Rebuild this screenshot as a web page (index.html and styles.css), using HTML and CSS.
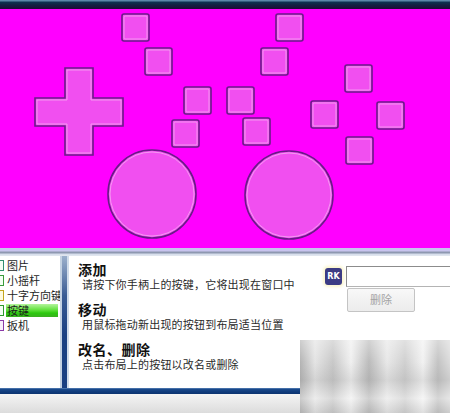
FILE: index.html
```html
<!DOCTYPE html>
<html>
<head>
<meta charset="utf-8">
<link rel="stylesheet" href="styles.css">
</head>
<body>
<div class="app">
  <div class="titlebar"></div>
  <svg class="canvas" width="450" height="239" viewBox="0 9 450 239">
    <rect class="bg" x="0" y="9" width="450" height="239"/>
    <g class="keys">
      <rect class="key" x="122" y="14" width="27" height="27" rx="2"/>
      <rect class="key" x="145" y="48" width="27" height="27" rx="2"/>
      <rect class="key" x="184" y="87" width="27" height="27" rx="2"/>
      <rect class="key" x="172" y="120" width="27" height="27" rx="2"/>
      <rect class="key" x="276" y="14" width="27" height="27" rx="2"/>
      <rect class="key" x="261" y="48" width="27" height="27" rx="2"/>
      <rect class="key" x="345" y="65" width="27" height="27" rx="2"/>
      <rect class="key" x="227" y="87" width="27" height="27" rx="2"/>
      <rect class="key" x="311" y="101" width="27" height="27" rx="2"/>
      <rect class="key" x="377" y="102" width="27" height="27" rx="2"/>
      <rect class="key" x="243" y="118" width="27" height="27" rx="2"/>
      <rect class="key" x="346" y="137" width="27" height="27" rx="2"/>
      <path class="key" d="M65,68 H93 V98 H123 V126 H93 V155 H65 V126 H35 V98 H65 Z"/>
      <circle class="key" cx="152" cy="194" r="44"/>
      <circle class="key" cx="289" cy="195" r="44"/>
    </g>
    <g class="hls">
      <rect class="hl" x="124" y="16" width="23" height="23" rx="1"/>
      <rect class="hl" x="147" y="50" width="23" height="23" rx="1"/>
      <rect class="hl" x="186" y="89" width="23" height="23" rx="1"/>
      <rect class="hl" x="174" y="122" width="23" height="23" rx="1"/>
      <rect class="hl" x="278" y="16" width="23" height="23" rx="1"/>
      <rect class="hl" x="263" y="50" width="23" height="23" rx="1"/>
      <rect class="hl" x="347" y="67" width="23" height="23" rx="1"/>
      <rect class="hl" x="229" y="89" width="23" height="23" rx="1"/>
      <rect class="hl" x="313" y="103" width="23" height="23" rx="1"/>
      <rect class="hl" x="379" y="104" width="23" height="23" rx="1"/>
      <rect class="hl" x="245" y="120" width="23" height="23" rx="1"/>
      <rect class="hl" x="348" y="139" width="23" height="23" rx="1"/>
      <path class="hl" d="M67,70 H91 V100 H121 V124 H91 V153 H67 V124 H37 V100 H67 Z"/>
      <circle class="hl" cx="152" cy="194" r="42"/>
      <circle class="hl" cx="289" cy="195" r="42"/>
    </g>
  </svg>
  <div class="strip"></div>
  <div class="bottom">
    <div class="leftcol">
      <div class="panel">
        <ul class="list">
          <li class="item"><span class="ico ico-pic"></span><span class="label">图片</span></li>
          <li class="item"><span class="ico ico-stick"></span><span class="label">小摇杆</span></li>
          <li class="item"><span class="ico ico-dpad"></span><span class="label">十字方向键</span></li>
          <li class="item selected"><span class="ico ico-key"></span><span class="label">按键</span></li>
          <li class="item"><span class="ico ico-trig"></span><span class="label">扳机</span></li>
        </ul>
        <div class="splitter"></div>
        <div class="help">
          <div class="block">
            <div class="head">添加</div>
            <div class="desc">请按下你手柄上的按键，它将出现在窗口中</div>
          </div>
          <div class="block">
            <div class="head">移动</div>
            <div class="desc">用鼠标拖动新出现的按钮到布局适当位置</div>
          </div>
          <div class="block">
            <div class="head">改名、删除</div>
            <div class="desc">点击布局上的按钮以改名或删除</div>
          </div>
        </div>
      </div>
      <div class="navy"></div>
      <div class="status"></div>
    </div>
    <div class="rightcol">
      <div class="controls">
        <div class="row">
          <span class="ime">RK</span>
          <input class="name" type="text">
        </div>
        <button class="del" disabled>删除</button>
      </div>
      <div class="watermark"></div>
    </div>
  </div>
</div>
</body>
</html>
```
FILE: styles.css
```css
html, body {
  margin: 0;
  padding: 0;
}
body {
  width: 450px;
  height: 413px;
  overflow: hidden;
  background: #ffffff;
  font-family: "Liberation Sans", "Noto Sans CJK SC", sans-serif;
  color: #1c1c1c;
}
.app {
  display: flex;
  flex-direction: column;
  width: 450px;
  height: 413px;
}
.titlebar {
  height: 9px;
  flex: none;
  background: linear-gradient(#5a86a8 0, #5a86a8 1px, #0d3352 2px, #122042 5px, #1e0a38 9px);
}
.canvas {
  display: block;
  flex: none;
}
.bg {
  fill: #ff00ff;
}
.key {
  fill: #f14ff0;
  stroke: #6a1a88;
  stroke-width: 1.6;
}
.hl {
  fill: none;
  stroke: #f6a4f2;
  stroke-width: 1;
  opacity: 0.85;
}
.strip {
  height: 8px;
  flex: none;
  background: linear-gradient(#c8c4ee 0, #c8c4ee 3px, #8e98b0 4px, #8e98b0 5px, #d4dcea 6px, #e4e8f0 8px);
}
.bottom {
  flex: 1;
  display: flex;
  min-height: 0;
}
.leftcol {
  width: 300px;
  display: flex;
  flex-direction: column;
}
.panel {
  height: 132px;
  display: flex;
  background: #ffffff;
}
.list {
  list-style: none;
  margin: 0;
  padding: 2px 0 0 0;
  width: 60px;
  overflow: hidden;
  flex: none;
}
.item {
  display: flex;
  align-items: center;
  height: 15px;
  white-space: nowrap;
}
.ico {
  flex: none;
  width: 9px;
  height: 9px;
  margin-left: -7px;
  margin-right: 2px;
  border: 1px solid #3a9a6a;
  background: #f4fff4;
}
.ico-pic { border-color: #2f8f70; }
.ico-stick { border-color: #3a9a3a; }
.ico-dpad { border-color: #c4a41c; background: #fffbe0; }
.ico-key { border-color: #2e9a2e; }
.ico-trig { border-color: #8a3aa8; background: #f8eefc; }
.label {
  flex: 1;
  font-size: 11px;
  line-height: 15px;
  height: 15px;
  padding: 1px 0 0 1px;
  box-sizing: border-box;
  overflow: hidden;
}
.selected .label {
  margin-right: 2px;
  background: linear-gradient(#b4f49c 0%, #62e23e 45%, #2cc80e 70%, #3ab020 100%) center / 100% 13px no-repeat;
}
.splitter {
  flex: none;
  width: 9px;
  background:
    linear-gradient(90deg, #c4d2e2 0, #c4d2e2 2px, transparent 2px, transparent 7px, #d0dcea 7px),
    linear-gradient(#9cb0cc 0, #3a5c94 30%, #1a4082 60%, #1a4082 100%);
}
.help {
  flex: 1;
  padding: 7px 0 0 9px;
  overflow: hidden;
}
.block {
  margin-bottom: 11px;
}
.head {
  font-size: 14px;
  font-weight: bold;
  line-height: 15px;
  letter-spacing: 0.5px;
  color: #111111;
}
.desc {
  font-size: 11px;
  line-height: 14px;
  letter-spacing: 0.2px;
  padding-left: 4px;
  white-space: nowrap;
  color: #2a2a2a;
}
.navy {
  height: 6px;
  flex: none;
  background: linear-gradient(#6e94c4 0, #1a4a8c 1px, #0e3a7a 4px, #0c3470 6px);
}
.status {
  flex: 1;
  background: linear-gradient(#f4f4f4, #dcdcdc);
}
.rightcol {
  width: 150px;
  display: flex;
  flex-direction: column;
}
.controls {
  height: 84px;
  background: #ffffff;
  padding-top: 10px;
  box-sizing: border-box;
}
.row {
  display: flex;
  align-items: flex-start;
  margin-right: -6px;
}
.ime {
  flex: none;
  width: 17px;
  height: 17px;
  margin: 2px 4px 0 25px;
  border-radius: 3px;
  background: #3c3c84;
  color: #ffffff;
  font-family: "DejaVu Sans", sans-serif;
  font-size: 8px;
  font-weight: bold;
  line-height: 17px;
  text-align: center;
  box-shadow: 0 0 3px 2px #fbf5cc;
}
.name {
  flex: 1;
  min-width: 0;
  height: 21px;
  box-sizing: border-box;
  margin: 0;
  padding: 0;
  border: 1px solid #b4b4b4;
  border-top-color: #8c8c8c;
  border-left-color: #8c8c8c;
  background: #ffffff;
}
.del {
  display: block;
  width: 68px;
  height: 24px;
  margin: 1px 0 0 47px;
  padding: 0;
  border: 1px solid #c4c4c4;
  border-radius: 2px;
  background: linear-gradient(#f8f8f8, #ececec);
  color: #a4a4a4;
  font-family: "Liberation Sans", "Noto Sans CJK SC", sans-serif;
  font-size: 11px;
  line-height: 22px;
}
.watermark {
  flex: 1;
  background:
    linear-gradient(rgba(255,255,255,0.35), rgba(255,255,255,0) 30%, rgba(120,120,120,0.15) 55%, rgba(255,255,255,0.3) 80%, rgba(150,150,150,0.2)),
    linear-gradient(90deg, #b4b4b4 0, #e4e4e4 10%, #c8c8c8 22%, #f0f0f0 34%, #bcbcbc 46%, #e8e8e8 58%, #d0d0d0 70%, #f2f2f2 82%, #c4c4c4 92%, #dcdcdc 100%);
}
```
